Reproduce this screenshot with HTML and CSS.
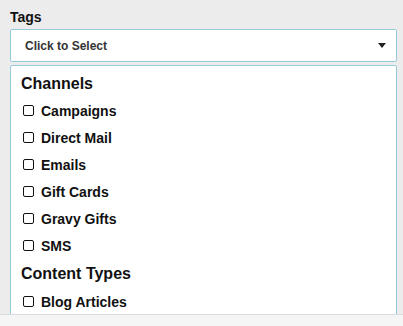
FILE: index.html
```html
<!DOCTYPE html>
<html>
<head>
<meta charset="utf-8">
<link rel="stylesheet" href="styles.css">
</head>
<body>
<div class="viewport">
  <div class="field">
    <div class="label">Tags</div>
    <div class="select">
      <span class="placeholder">Click to Select</span>
      <svg class="caret" width="8" height="5" viewBox="0 0 8 5"><path d="M0 0H8L4 5Z" fill="#222"/></svg>
    </div>
    <div class="panel">
      <div class="group">Channels</div>
      <label class="opt"><span class="box"></span>Campaigns</label>
      <label class="opt"><span class="box"></span>Direct Mail</label>
      <label class="opt"><span class="box"></span>Emails</label>
      <label class="opt"><span class="box"></span>Gift Cards</label>
      <label class="opt"><span class="box"></span>Gravy Gifts</label>
      <label class="opt"><span class="box"></span>SMS</label>
      <div class="group">Content Types</div>
      <label class="opt"><span class="box"></span>Blog Articles</label>
    </div>
  </div>
</div>
<div class="footer"></div>
</body>
</html>
```
FILE: styles.css
```css
html, body {
  margin: 0;
  padding: 0;
  background: #f5f5f5;
  font-family: "Liberation Sans", Arial, sans-serif;
  color: #111;
}
.viewport {
  height: 314px;
  overflow: hidden;
  background: #ececec;
  border-bottom: 1px solid #d6dce2;
}
.field {
  padding: 10px 6px 0 10px;
}
.label {
  font-size: 14px;
  font-weight: bold;
  line-height: 15px;
  height: 19px;
}
.select {
  height: 31px;
  background: #fff;
  border: 1px solid #97cbdc;
  border-radius: 2px;
  display: flex;
  align-items: center;
  justify-content: space-between;
  padding: 0 10px 0 14px;
}
.placeholder {
  font-size: 12px;
  font-weight: bold;
  color: #333;
}
.caret {
  display: block;
}
.panel {
  margin-top: 3px;
  background: #fff;
  border: 1px solid #97cbdc;
  border-radius: 2px;
  padding: 6px 10px 10px 10px;
}
.group {
  font-size: 16px;
  font-weight: bold;
  line-height: 22px;
  height: 25px;
  padding-top: 1px;
  box-sizing: border-box;
}
.opt + .group {
  margin-top: 3px;
  height: 26px;
}
.opt {
  display: flex;
  align-items: center;
  height: 27px;
  font-size: 14px;
  font-weight: bold;
}
.box {
  width: 9px;
  height: 9px;
  border: 1px solid #111;
  border-radius: 2px;
  margin: 0 7px 0 2px;
  background: #fff;
}
.footer {
  height: 11px;
}
```
